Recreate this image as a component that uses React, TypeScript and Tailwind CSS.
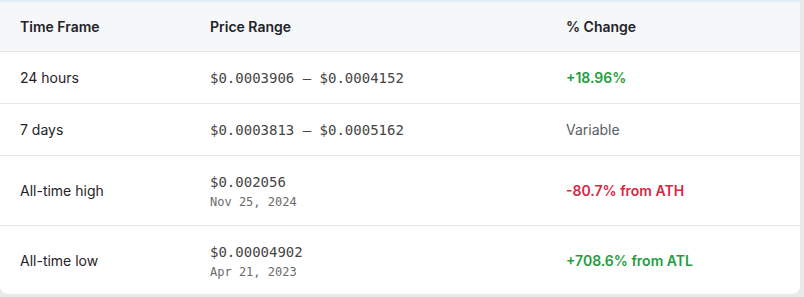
const rows = [
  { frame: '24 hours', price: '$0.0003906 – $0.0004152', change: '+18.96%', tone: 'up', h: 'h-[52px]' },
  { frame: '7 days', price: '$0.0003813 – $0.0005162', change: 'Variable', tone: 'flat', h: 'h-[52px]' },
  { frame: 'All-time high', price: '$0.002056', date: 'Nov 25, 2024', change: '-80.7% from ATH', tone: 'down', h: 'h-[70px]' },
  { frame: 'All-time low', price: '$0.00004902', date: 'Apr 21, 2023', change: '+708.6% from ATL', tone: 'up', h: 'h-[69px]' },
];

const toneClass: Record<string, string> = {
  up: 'text-[#1f9d3f] font-semibold',
  down: 'text-[#d92643] font-semibold',
  flat: 'text-[#595e64]',
};

export default function App() {
  return (
    <div className="w-[804px] h-[297px] bg-[#e9e9ea] font-['Inter',sans-serif] text-[14px] text-[#1f2328]">
      <div className="w-[800px] h-[294px] bg-white rounded-b-lg border-t-2 border-[#e1ecf8] overflow-hidden">
        {/* Header */}
        <div className="grid grid-cols-[190px_356px_1fr] h-[50px] items-center bg-[#f6f7f9] border-b border-[#e3e5e8] font-semibold">
          <div className="pl-5">Time Frame</div>
          <div className="pl-5">Price Range</div>
          <div className="pl-5">% Change</div>
        </div>

        {rows.map((r, i) => (
          <div
            key={r.frame}
            className={`grid grid-cols-[190px_356px_1fr] items-center ${r.h} ${
              i < rows.length - 1 ? 'border-b border-[#e6e7ea]' : ''
            }`}
          >
            <div className="pl-5">{r.frame}</div>
            <div className="pl-5 font-['DejaVu_Sans_Mono',monospace]">
              <div className="leading-5 text-[#454545]">{r.price}</div>
              {r.date && <div className="mt-0.5 text-[12px] leading-4 text-[#6b6b6b]">{r.date}</div>}
            </div>
            <div className={`pl-5 ${toneClass[r.tone]}`}>{r.change}</div>
          </div>
        ))}
      </div>
    </div>
  );
}
